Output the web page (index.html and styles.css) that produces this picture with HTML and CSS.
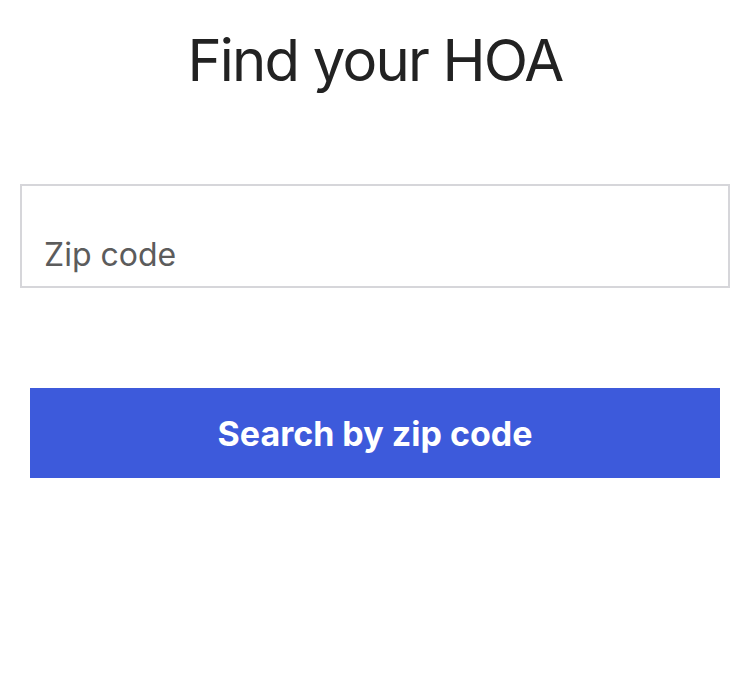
FILE: index.html
```html
<!DOCTYPE html>
<html lang="en">
<head>
    <meta charset="UTF-8">
    <meta name="viewport" content="width=device-width, initial-scale=1.0">
    <title>Find your HOA</title>
    <link rel="stylesheet" href="styles.css">
</head>
<body>
    <h1>Find your HOA</h1>

    <div class="search-form">
        <label class="field">
            <input type="text" id="zipInput" placeholder="Zip code">
        </label>
        <button id="searchBtn">Search by zip code</button>
    </div>
</body>
</html>
```

FILE: styles.css
```css
body {
    font-family: Inter, 'Liberation Sans', sans-serif;
    margin: 0;
    padding: 0 20px;
    background-color: #fff;
    color: #222;
}
h1 {
    text-align: center;
    font-size: 58px;
    font-weight: 400;
    letter-spacing: -1.8px;
    margin: 24px 0 0;
    line-height: 72px;
    color: #222;
}
.search-form {
    display: flex;
    flex-direction: column;
    margin-top: 88px;
}
.field {
    border: 2px solid #d6d6da;
    box-sizing: border-box;
    height: 104px;
    padding: 0 22px;
    display: flex;
    align-items: flex-end;
}
.field input {
    border: none;
    outline: none;
    width: 100%;
    font-family: inherit;
    font-size: 32px;
    padding: 0 0 12px;
    background: transparent;
    color: #222;
}
.field input::placeholder {
    color: #5c5c5c;
}
button {
    margin: 100px 10px 0;
    height: 90px;
    background-color: #3d5adb;
    color: #fff;
    border: none;
    font-family: inherit;
    font-size: 34px;
    font-weight: 700;
    cursor: pointer;
}
```
